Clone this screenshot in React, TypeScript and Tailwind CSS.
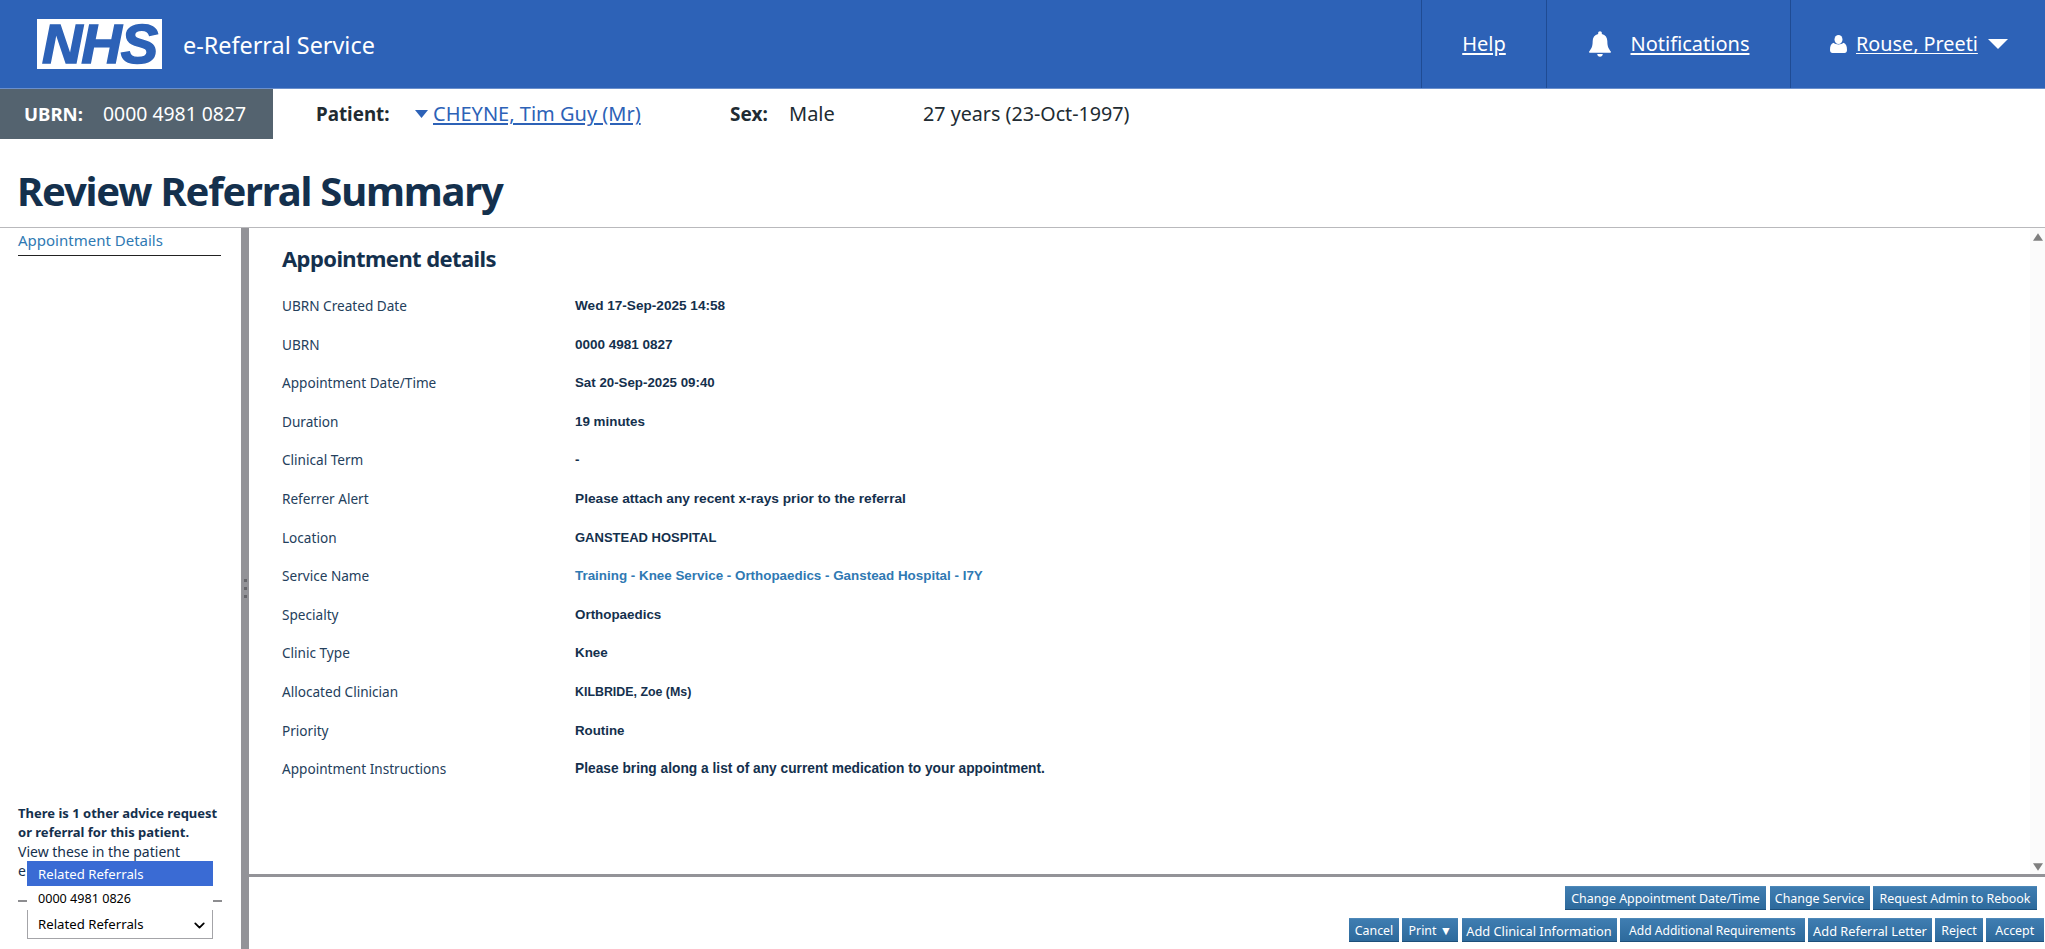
import React from "react";
import { ChevronDown } from "lucide-react";

const rows: { k: string; v: string; c: string }[] = [
  { k: "UBRN Created Date", v: "Wed 17-Sep-2025 14:58", c: "text-[13.6px] text-[#14304d]" },
  { k: "UBRN", v: "0000 4981 0827", c: "text-[13.5px] text-[#14304d]" },
  { k: "Appointment Date/Time", v: "Sat 20-Sep-2025 09:40", c: "text-[13.3px] text-[#14304d]" },
  { k: "Duration", v: "19 minutes", c: "text-[13.4px] text-[#14304d]" },
  { k: "Clinical Term", v: "-", c: "text-[13.4px] text-[#14304d]" },
  { k: "Referrer Alert", v: "Please attach any recent x-rays prior to the referral", c: "text-[13.7px] text-[#14304d]" },
  { k: "Location", v: "GANSTEAD HOSPITAL", c: "text-[13px] text-[#14304d]" },
  { k: "Service Name", v: "Training - Knee Service - Orthopaedics - Ganstead Hospital - I7Y", c: "text-[13.4px] text-[#2f79b3]" },
  { k: "Specialty", v: "Orthopaedics", c: "text-[13.4px] text-[#14304d]" },
  { k: "Clinic Type", v: "Knee", c: "text-[13.4px] text-[#14304d]" },
  { k: "Allocated Clinician", v: "KILBRIDE, Zoe (Ms)", c: "text-[12.4px] text-[#14304d]" },
  { k: "Priority", v: "Routine", c: "text-[13.3px] text-[#14304d]" },
  { k: "Appointment Instructions", v: "Please bring along a list of any current medication to your appointment.", c: "text-[13.75px] text-[#14304d]" },
];

function Btn({ children, className }: { children: React.ReactNode; className: string }) {
  return (
    <button className={`h-[24px] px-0 pt-[2px] leading-none text-white bg-gradient-to-b from-[#3f7db1] to-[#2d6a9c] border-b border-b-[#1d4f7a] border-t border-t-[#4d88b8] whitespace-nowrap ${className}`}>
      {children}
    </button>
  );
}

export default function App() {
  return (
    <div className="h-[949px] w-[2045px] overflow-hidden flex flex-col bg-white text-[#14304d] font-['Noto_Sans','Open_Sans',sans-serif]">
      <header className="h-[89px] shrink-0 bg-[#2d62b7] border-b border-b-[#6a8fcc] flex items-stretch text-white">
        <div className="flex items-center flex-1 pl-[37px]">
          <div className="w-[125px] h-[50px] bg-white flex items-center justify-center">
            <span className="font-['Liberation_Sans',sans-serif] font-bold italic text-[56px] leading-[50px] tracking-[-1px] text-[#2d62b7] [-webkit-text-stroke:1.5px_#2d62b7]">NHS</span>
          </div>
          <span className="ml-[21px] mt-[4px] text-[23.4px] leading-none">e-Referral Service</span>
        </div>
        <div className="w-[125px] border-l border-l-[#1f4b93] flex items-center justify-center">
          <a className="text-[20px] underline underline-offset-2">Help</a>
        </div>
        <div className="w-[244px] border-l border-l-[#1f4b93] flex items-center justify-center gap-[20px] pl-[1px]">
          <svg width="22" height="26" viewBox="0 0 24 28" fill="white"><path d="M12 0c1.200 0 2 .8 2 2v1c4 .9 6 4 6 8 0 6 1.500 8 4 11.500 0 .8-.5 1-1 1H1c-.5 0-1-.2-1-1C2.500 19 4 17 4 11c0-4 2-7.100 6-8V2c0-1.200.8-2 2-2z" /><path d="M9 25h6c0 1.600-1.300 3-3 3s-3-1.400-3-3z" /></svg>
          <a className="text-[20px] underline underline-offset-2">Notifications</a>
        </div>
        <div className="w-[255px] border-l border-l-[#1f4b93] flex items-center pl-[39px]">
          <svg width="17" height="18" viewBox="0 0 17 18" fill="white"><ellipse cx="8.500" cy="4.500" rx="4" ry="4.500" /><path d="M0 15c0-4 1-6 3.500-7.200 2.500 2.200 7.500 2.200 10 0C16 9 17 11 17 15c0 2-1 3-2.500 3h-12C1 18 0 17 0 15z" /></svg>
          <a className="ml-[9px] text-[19.8px] underline underline-offset-2">Rouse, Preeti</a>
          <svg className="ml-[10px]" width="20" height="10" viewBox="0 0 20 10" fill="white"><path d="M0 0h20L10 10z" /></svg>
        </div>
      </header>

      <div className="h-[50px] shrink-0 flex items-center text-[20px] text-[#212b32]">
        <div className="w-[273px] h-full bg-[#54636f] text-white flex items-center pl-[24px]">
          <span className="font-bold text-[18.6px]">UBRN:</span>
          <span className="ml-[20px] text-[19.4px]">0000 4981 0827</span>
        </div>
        <span className="ml-[43px] font-bold text-[18.8px] w-[99px]">Patient:</span>
        <svg width="13" height="8" viewBox="0 0 13 8" fill="#2d62b7"><path d="M0 0h13L6.500 8z" /></svg>
        <a className="ml-[5px] text-[#2d62b7] underline underline-offset-2 w-[297px] whitespace-nowrap">CHEYNE, Tim Guy (Mr)</a>
        <span className="font-bold text-[19px] w-[59px]">Sex:</span>
        <span className="w-[134px]">Male</span>
        <span className="text-[19.7px]">27 years (23-Oct-1997)</span>
      </div>

      <h1 className="h-[89px] shrink-0 flex items-center pl-[17px] pt-[15px] text-[40px] tracking-[-1.2px] font-bold text-[#14304d] border-b border-b-[#b9b9bc]">Review Referral Summary</h1>

      <div className="flex-1 min-h-0 flex">
        <aside className="w-[241px] shrink-0 flex flex-col pl-[18px] relative">
          <div className="w-[203px] h-[28px] border-b border-b-[#222] text-[15px] leading-[25px] text-[#2f79b3]">Appointment Details</div>
          <div className="mt-auto pb-[47px] w-[215px] text-[14px] leading-[19px]">
            <p className="font-bold text-[13px]">There is 1 other advice request or referral for this patient.</p>
            <p>View these in the patient</p>
            <p>e</p>
            <div className="mt-[20px] h-[2px] w-[204px] bg-[#8d8d90]" />
          </div>
          <div className="absolute left-[27px] top-[633px] w-[186px] text-black">
            <div className="h-[25px] bg-[#3a6bd4] text-white text-[13.2px] pl-[11px] pt-[2px] flex items-center">Related Referrals</div>
            <div className="h-[24px] bg-white text-[12.6px] pl-[11px] pt-[2px] flex items-center">0000 4981 0826</div>
            <div className="h-[29px] bg-white border border-[#a4a4a8] border-t-0 text-[13.2px] pl-[10px] pr-[4px] pt-[2px] flex items-center justify-between">
              Related Referrals
              <ChevronDown size={17} strokeWidth={2.5} />
            </div>
          </div>
        </aside>
        <div className="w-[8px] shrink-0 bg-[#939398] flex flex-col items-center justify-center gap-[5px]">
          <span className="w-[3px] h-[3px] bg-[#66666b]" />
          <span className="w-[3px] h-[3px] bg-[#66666b]" />
          <span className="w-[3px] h-[3px] bg-[#66666b]" />
        </div>
        <main className="flex-1 min-w-0 flex flex-col">
          <div className="h-[649px] shrink-0 flex border-b-[3px] border-b-[#939398]">
            <div className="flex-1 pl-[33px] pt-[14px]">
              <h2 className="text-[22px] tracking-[-0.6px] font-bold leading-[32px] mb-[19px]">Appointment details</h2>
              {rows.map(({ k, v, c }) => (
                <div key={k} className="flex h-[38.600px] items-start text-[13.6px] leading-[26px] text-[#24405c]">
                  <span className="w-[293px]">{k}</span>
                  <span className={`font-['Liberation_Sans',sans-serif] font-bold ${c}`}>{v}</span>
                </div>
              ))}
            </div>
            <div className="w-[15px] bg-[#fbfbfb] flex flex-col items-center justify-between pt-[5px] pb-[3px]">
              <svg width="10" height="8" viewBox="0 0 11 8" fill="#7f7f7f"><path d="M5.500 0L11 8H0z" /></svg>
              <svg width="10" height="8" viewBox="0 0 11 8" fill="#7f7f7f"><path d="M0 0h11L5.500 8z" /></svg>
            </div>
          </div>
          <div className="flex-1 flex flex-col items-end pt-[9px] gap-[8px] pr-[1.500px]">
            <div className="flex gap-[3.500px] mr-[6.500px]">
              <Btn className="w-[201px] text-[12.4px]">Change Appointment Date/Time</Btn>
              <Btn className="w-[100px] text-[12.4px]">Change Service</Btn>
              <Btn className="w-[164px] text-[12.4px]">Request Admin to Rebook</Btn>
            </div>
            <div className="flex gap-[3.250px]">
              <Btn className="w-[50px] text-[12.4px]">Cancel</Btn>
              <Btn className="w-[56px] text-[12.4px]">Print ▼</Btn>
              <Btn className="w-[155px] text-[12.8px]">Add Clinical Information</Btn>
              <Btn className="w-[185px] text-[12.1px]">Add Additional Requirements</Btn>
              <Btn className="w-[124px] text-[12.8px]">Add Referral Letter</Btn>
              <Btn className="w-[47.500px] text-[12.4px]">Reject</Btn>
              <Btn className="w-[57.500px] text-[12.4px]">Accept</Btn>
            </div>
          </div>
        </main>
      </div>
    </div>
  );
}
